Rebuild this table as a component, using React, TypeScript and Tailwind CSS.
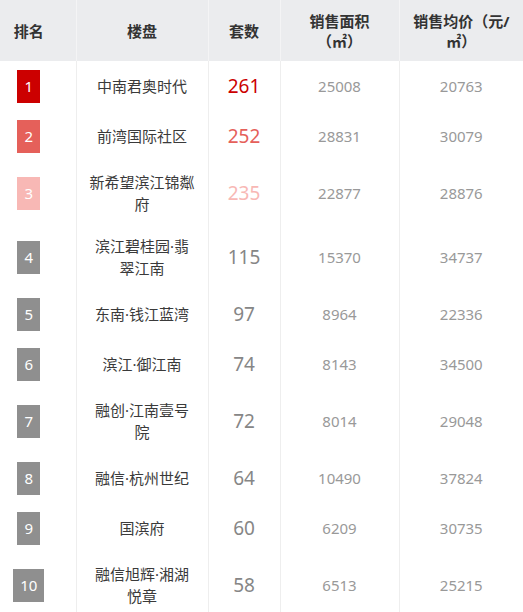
const rows = [
  { rank: 1, name: "中南君奥时代", count: 261, area: 25008, price: 20763 },
  { rank: 2, name: "前湾国际社区", count: 252, area: 28831, price: 30079 },
  { rank: 3, name: "新希望滨江锦粼府", count: 235, area: 22877, price: 28876 },
  { rank: 4, name: "滨江碧桂园·翡翠江南", count: 115, area: 15370, price: 34737 },
  { rank: 5, name: "东南·钱江蓝湾", count: 97, area: 8964, price: 22336 },
  { rank: 6, name: "滨江·御江南", count: 74, area: 8143, price: 34500 },
  { rank: 7, name: "融创·江南壹号院", count: 72, area: 8014, price: 29048 },
  { rank: 8, name: "融信·杭州世纪", count: 64, area: 10490, price: 37824 },
  { rank: 9, name: "国滨府", count: 60, area: 6209, price: 30735 },
  { rank: 10, name: "融信旭辉·湘湖悦章", count: 58, area: 6513, price: 25215 },
]

const badgeColor = (rank: number) =>
  rank === 1 ? "bg-[#cc0000]" : rank === 2 ? "bg-[#e5605a]" : rank === 3 ? "bg-[#f8b8b5]" : "bg-[#8f8f8f]"

const countColor = (rank: number) =>
  rank === 1 ? "text-[#cc0000]" : rank === 2 ? "text-[#e5605a]" : rank === 3 ? "text-[#f8b8b5]" : "text-[#868686]"

export default function App() {
  return (
    <div
      className="w-[523px] bg-white"
      style={{ fontFamily: '"Noto Sans", "Noto Sans CJK SC", sans-serif' }}
    >
      <table className="w-full table-fixed border-collapse">
        <colgroup>
          <col className="w-[76px]" />
          <col className="w-[132px]" />
          <col className="w-[72px]" />
          <col className="w-[119px]" />
          <col className="w-[124px]" />
        </colgroup>
        <thead>
          <tr className="h-[61px] bg-[#ebecee] text-[15px] font-bold leading-5 text-[#333]">
            <th className="pr-[18px] text-center">排名</th>
            <th className="border-l border-[#f4f4f5] px-3 text-center">楼盘</th>
            <th className="border-l border-[#f4f4f5] px-2 text-center">套数</th>
            <th className="border-l border-[#f4f4f5] px-3 text-center">销售面积（㎡）</th>
            <th className="border-l border-[#f4f4f5] px-3 text-center">销售均价（元/㎡）</th>
          </tr>
        </thead>
        <tbody>
          {rows.map((r) => (
            <tr key={r.rank}>
              <td className="py-0 pr-[18px] text-center align-middle">
                <span
                  className={`inline-flex h-[33px] items-center justify-center px-[7px] text-[15px] text-white ${badgeColor(r.rank)}`}
                >
                  {r.rank}
                </span>
              </td>
              <td className="border-l border-[#eeeeee] px-3 py-[10px] text-center align-middle text-[15px] leading-[22px] text-[#3a3a3a]">
                {r.name}
              </td>
              <td
                className={`border-l border-[#eeeeee] py-[10px] text-center align-middle text-[19px] leading-[30px] ${countColor(r.rank)}`}
              >
                {r.count}
              </td>
              <td className="border-l border-[#eeeeee] py-[10px] text-center align-middle text-[15px] text-[#999]">
                {r.area}
              </td>
              <td className="border-l border-[#eeeeee] py-[10px] text-center align-middle text-[15px] text-[#999]">
                {r.price}
              </td>
            </tr>
          ))}
        </tbody>
      </table>
    </div>
  )
}
